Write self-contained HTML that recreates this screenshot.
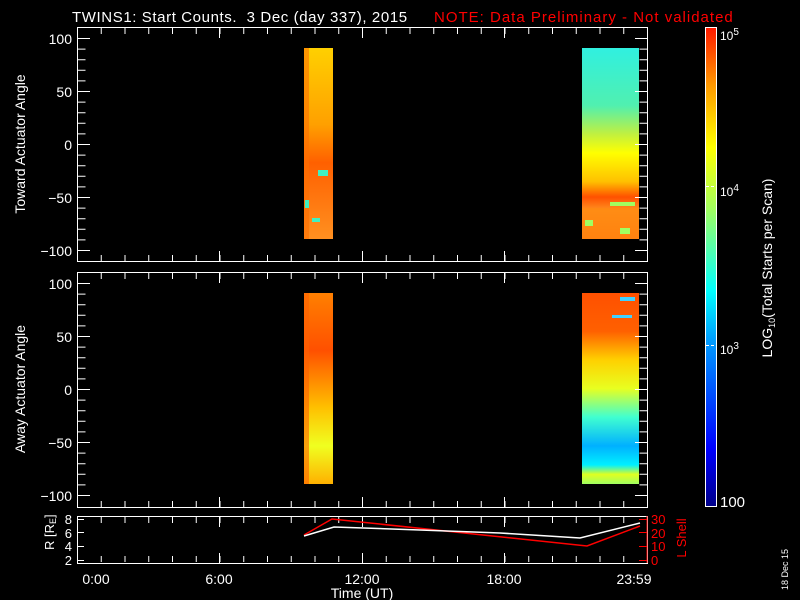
<!DOCTYPE html>
<html><head><meta charset="utf-8"><style>
html,body{margin:0;padding:0;background:#000;width:800px;height:600px;overflow:hidden}
svg{display:block}
text{font-family:"Liberation Sans",sans-serif;fill:#fff}
</style></head><body>
<svg width="800" height="600" viewBox="0 0 800 600">
<defs>
<linearGradient id="cb" x1="0" y1="1" x2="0" y2="0">
<stop offset="0" stop-color="#00008a"/><stop offset="0.12" stop-color="#0000ff"/>
<stop offset="0.35" stop-color="#00a0ff"/><stop offset="0.45" stop-color="#00ffff"/>
<stop offset="0.62" stop-color="#a0ff60"/><stop offset="0.75" stop-color="#ffff00"/>
<stop offset="0.88" stop-color="#ff9900"/><stop offset="1" stop-color="#ff1a00"/>
</linearGradient>
<linearGradient id="r1" x1="0" y1="0" x2="0" y2="1">
<stop offset="0" stop-color="#30f0e0"/><stop offset="0.3" stop-color="#50f0b0"/>
<stop offset="0.45" stop-color="#c0f040"/><stop offset="0.55" stop-color="#ffff00"/>
<stop offset="0.7" stop-color="#ffc000"/><stop offset="0.78" stop-color="#ff5000"/>
<stop offset="0.85" stop-color="#ff9020"/><stop offset="1" stop-color="#ff7010"/>
</linearGradient>
<linearGradient id="r2" x1="0" y1="0" x2="0" y2="1">
<stop offset="0" stop-color="#ff5000"/><stop offset="0.2" stop-color="#ff6000"/>
<stop offset="0.35" stop-color="#ffd000"/><stop offset="0.5" stop-color="#e8ff20"/>
<stop offset="0.65" stop-color="#40ffd0"/><stop offset="0.8" stop-color="#00b0ff"/>
<stop offset="0.9" stop-color="#00f0ff"/><stop offset="0.95" stop-color="#e0ff20"/>
<stop offset="1" stop-color="#a0ff60"/>
</linearGradient>
<linearGradient id="l1" x1="0" y1="0" x2="0" y2="1">
<stop offset="0" stop-color="#ffd000"/><stop offset="0.4" stop-color="#ffa000"/>
<stop offset="0.6" stop-color="#ff6000"/><stop offset="1" stop-color="#ff9020"/>
</linearGradient>
<linearGradient id="l2" x1="0" y1="0" x2="0" y2="1">
<stop offset="0" stop-color="#ff8000"/><stop offset="0.3" stop-color="#ff5000"/>
<stop offset="0.6" stop-color="#ffc000"/><stop offset="0.8" stop-color="#f0ff20"/>
<stop offset="1" stop-color="#ffb000"/>
</linearGradient>
</defs>
<text x="72" y="22" font-size="15" letter-spacing="0.6" xml:space="preserve">TWINS1: Start Counts.  3 Dec (day 337), 2015</text>
<text x="434" y="22" font-size="15" letter-spacing="1" style="fill:#ff0000">NOTE: Data Preliminary - Not validated</text>

<!-- data -->
<rect x="304" y="48" width="29" height="191" fill="url(#l1)"/>
<rect x="304" y="48" width="5" height="191" fill="#ff7000" opacity="0.6"/>
<g fill="#40f0c0"><rect x="318" y="170" width="10" height="6"/><rect x="305" y="200" width="4" height="8"/><rect x="312" y="218" width="8" height="4"/></g>
<rect x="582" y="48" width="57" height="191" fill="url(#r1)"/>
<rect x="582" y="208" width="57" height="31" fill="#ff8a10" opacity="0.7"/>
<g fill="#a0ff60"><rect x="610" y="202" width="25" height="4"/><rect x="585" y="220" width="8" height="6"/><rect x="620" y="228" width="10" height="6"/></g>
<rect x="304" y="293" width="29" height="191" fill="url(#l2)"/>
<rect x="304" y="293" width="5" height="191" fill="#ff6000" opacity="0.6"/>
<rect x="582" y="293" width="57" height="191" fill="url(#r2)"/>
<g fill="#40d0ff"><rect x="620" y="297" width="15" height="4"/><rect x="612" y="315" width="20" height="3"/></g>

<g stroke="#fff" fill="none">
<rect x="77.5" y="27.5" width="570" height="234"/>
<rect x="77.5" y="272.5" width="570" height="235"/>
<rect x="77.5" y="516.5" width="570" height="47"/>
<line x1="81.5" y1="38" x2="81.5" y2="252" stroke-width="8" stroke-dasharray="1 9.6"/>
<line x1="643.5" y1="38" x2="643.5" y2="252" stroke-width="8" stroke-dasharray="1 9.6"/>
<line x1="81.5" y1="283" x2="81.5" y2="497" stroke-width="8" stroke-dasharray="1 9.6"/>
<line x1="643.5" y1="283" x2="643.5" y2="497" stroke-width="8" stroke-dasharray="1 9.6"/>
<path d="M78 38.5h12M78 91.5h12M78 144.5h12M78 197.5h12M78 250.5h12M635 38.5h12M635 91.5h12M635 144.5h12M635 197.5h12M635 250.5h12
M78 283.5h12M78 336.5h12M78 389.5h12M78 442.5h12M78 495.5h12M635 283.5h12M635 336.5h12M635 389.5h12M635 442.5h12M635 495.5h12"/>
<line x1="77" y1="31" x2="648" y2="31" stroke-width="6" stroke-dasharray="1 22.75"/>
<line x1="77" y1="258" x2="648" y2="258" stroke-width="6" stroke-dasharray="1 22.75"/>
<line x1="77" y1="276" x2="648" y2="276" stroke-width="6" stroke-dasharray="1 22.75"/>
<line x1="77" y1="504" x2="648" y2="504" stroke-width="6" stroke-dasharray="1 22.75"/>
<line x1="77" y1="520" x2="648" y2="520" stroke-width="6" stroke-dasharray="1 22.75"/>
<line x1="77" y1="559" x2="648" y2="559" stroke-width="6" stroke-dasharray="1 22.75"/>
<path d="M219.5 28v10M362.5 28v10M504.5 28v10M219.5 251v10M362.5 251v10M504.5 251v10M219.5 273v10M362.5 273v10M504.5 273v10M219.5 497v10M362.5 497v10M504.5 497v10M219.5 517v10M362.5 517v10M504.5 517v10M219.5 553v10M362.5 553v10M504.5 553v10"/>
<path d="M78 519.5h6M78 532.5h6M78 546.5h6M78 560.5h6"/>
<rect x="705.5" y="27.5" width="11" height="479"/>
</g>
<rect x="706" y="28" width="10" height="478" fill="url(#cb)"/>
<g stroke="#fff" stroke-dasharray="3 2"><line x1="706" y1="186.5" x2="716" y2="186.5"/><line x1="706" y1="345.5" x2="716" y2="345.5"/></g>
<g stroke="#f00" fill="none"><path d="M647 516v47M647 519.5h-8M647 532.5h-8M647 546.5h-8M647 560.5h-8"/>
<polyline points="304,535 332,519 587,546 640,526" stroke-width="1.5"/></g>
<polyline points="304,536 334,527 420,530 500,533 580,538 640,523" stroke="#fff" fill="none" stroke-width="1.5"/>

<g font-size="14" text-anchor="end">
<text x="72" y="44">100</text><text x="72" y="97">50</text><text x="72" y="150">0</text><text x="72" y="203">−50</text><text x="72" y="256">−100</text>
<text x="72" y="289">100</text><text x="72" y="342">50</text><text x="72" y="395">0</text><text x="72" y="448">−50</text><text x="72" y="501">−100</text>
<text x="72" y="524" font-size="13">8</text><text x="72" y="538" font-size="13">6</text><text x="72" y="551" font-size="13">4</text><text x="72" y="565" font-size="13">2</text>
</g>
<g font-size="13"><text x="651" y="524" style="fill:#f00">30</text><text x="651" y="538" style="fill:#f00">20</text><text x="651" y="551" style="fill:#f00">10</text><text x="651" y="565" style="fill:#f00">0</text></g>
<text transform="translate(686,538) rotate(-90)" font-size="13" text-anchor="middle" style="fill:#f00">L Shell</text>
<text transform="translate(54,550) rotate(-90)" font-size="13">R [R<tspan font-size="9" dy="2">E</tspan><tspan dy="-2">]</tspan></text>
<g font-size="14" text-anchor="middle">
<text x="96" y="584">0:00</text><text x="219" y="584">6:00</text><text x="362" y="584">12:00</text><text x="504" y="584">18:00</text><text x="634" y="584">23:59</text>
<text x="362" y="598">Time (UT)</text>
</g>
<text transform="translate(25,144) rotate(-90)" font-size="14" text-anchor="middle">Toward Actuator Angle</text>
<text transform="translate(25,389) rotate(-90)" font-size="14" text-anchor="middle">Away Actuator Angle</text>
<text transform="translate(772,268) rotate(-90)" font-size="14" text-anchor="middle">LOG<tspan font-size="9" dy="3">10</tspan><tspan dy="-3">(Total Starts per Scan)</tspan></text>
<g font-size="12"><text x="720" y="40">10<tspan font-size="10" dy="-5">5</tspan></text><text x="720" y="196">10<tspan font-size="10" dy="-5">4</tspan></text><text x="720" y="354">10<tspan font-size="10" dy="-5">3</tspan></text><text x="720" y="507" font-size="15">100</text></g>
<text transform="translate(788,590) rotate(-90)" font-size="9">18 Dec 15</text>
</svg>
</body></html>
